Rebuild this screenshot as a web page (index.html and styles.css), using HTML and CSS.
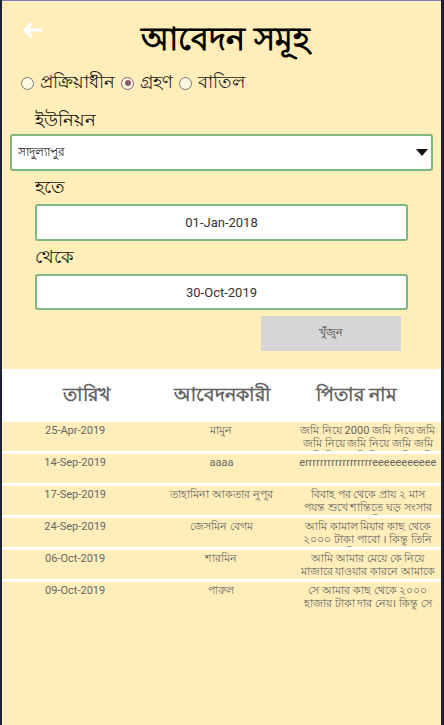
FILE: index.html
```html
<!DOCTYPE html>
<html lang="bn">
<head>
<meta charset="utf-8">
<title>আবেদন সমূহ</title>
<link rel="stylesheet" href="styles.css">
</head>
<body>
<div class="app">
  <header class="header">
    <span class="back">
      <svg width="20" height="16" viewBox="0 0 20 16"><path d="M18.5 8H3 M9 2 L3 8 L9 14" fill="none" stroke="#fff" stroke-width="3.2" stroke-linecap="round" stroke-linejoin="round"/></svg>
    </span>
    <h1 class="title">আবেদন সমূহ</h1>
  </header>

  <div class="radios">
    <label class="radio"><span class="dot"></span>প্রক্রিয়াধীন</label>
    <label class="radio checked"><span class="dot"></span>গ্রহণ</label>
    <label class="radio"><span class="dot"></span>বাতিল</label>
  </div>

  <div class="label">ইউনিয়ন</div>
  <div class="select">
    <span class="select-text">সাদুল্যাপুর</span>
    <svg class="caret" width="12" height="7" viewBox="0 0 12 7"><polygon points="0,0 12,0 6,7" fill="#111"/></svg>
  </div>

  <div class="label label-date">হতে</div>
  <div class="input">01-Jan-2018</div>

  <div class="label label-date">থেকে</div>
  <div class="input input2">30-Oct-2019</div>

  <div class="actions">
    <button class="btn">খুঁজুন</button>
  </div>

  <div class="table">
    <div class="thead">
      <div>তারিখ</div>
      <div>আবেদনকারী</div>
      <div>পিতার নাম</div>
    </div>
    <div class="row">
      <div class="c-date">25-Apr-2019</div>
      <div class="c-name">মামুন</div>
      <div class="c-desc">জমি নিয়ে 2000 জমি নিয়ে জমি জমি নিয়ে জমি নিয়ে জমি জমি জমি নিয়ে জমি নিয়ে জমি জমি</div>
    </div>
    <div class="row">
      <div class="c-date">14-Sep-2019</div>
      <div class="c-name">aaaa</div>
      <div class="c-desc">errrrrrrrrrrrrrrrrreeeeeeeeeee</div>
    </div>
    <div class="row">
      <div class="c-date">17-Sep-2019</div>
      <div class="c-name">তাহামিনা আকতার নুপুর</div>
      <div class="c-desc c-narrow">বিবাহ পর থেকে প্রায় ২ মাস পযন্ত শুখে শান্তিতে ঘড় সংসার করেছি</div>
    </div>
    <div class="row">
      <div class="c-date">24-Sep-2019</div>
      <div class="c-name">জেসমিন বেগম</div>
      <div class="c-desc">আমি কামাল মিয়ার কাছ থেকে ২০০০ টাকা পাবো । কিন্তু তিনি দিচ্ছেন না</div>
    </div>
    <div class="row">
      <div class="c-date">06-Oct-2019</div>
      <div class="c-name">শারমিন</div>
      <div class="c-desc">আমি আমার মেয়ে কে নিয়ে মাজারে যাওয়ার কারনে আমাকে মারধর করে</div>
    </div>
    <div class="row">
      <div class="c-date">09-Oct-2019</div>
      <div class="c-name">পারুল</div>
      <div class="c-desc">সে আমার কাছ থেকে ২০০০ হাজার টাকা দার নেয়। কিন্তু সে ফেরত দেয় না</div>
    </div>
  </div>
</div>
</body>
</html>
```

FILE: styles.css
```css
* { box-sizing: border-box; }

html, body {
  margin: 0;
  padding: 0;
  background: #1d2132;
}

body {
  font-family: "Noto Sans", Roboto, sans-serif;
  color: #1a1a1a;
}

.app {
  margin: 0 3px 0 2px;
  min-height: 725px;
  background: #ffeeba;
  border-top: 1px solid #7d80b4;
}

.header {
  height: 58px;
  display: flex;
  align-items: center;
  padding-left: 20px;
}

.back {
  display: flex;
  width: 20px;
  margin-top: 0;
}

.title {
  flex: 1;
  margin: 16px 0 0;
  padding-right: 32px;
  text-align: center;
  font-size: 32px;
  font-weight: 700;
  color: #000;
  line-height: 40px;
}

.radios {
  height: 48px;
  display: flex;
  align-items: center;
  padding-left: 19px;
  gap: 6px;
}

.radio {
  display: flex;
  align-items: center;
  gap: 6px;
  font-size: 18px;
  color: #1a1a1a;
}

.dot {
  width: 13px;
  height: 13px;
  border-radius: 50%;
  border: 1.5px solid #777;
  background: #fff8e0;
  display: flex;
  align-items: center;
  justify-content: center;
}

.checked .dot {
  border-color: #8a5c6d;
}

.checked .dot::after {
  content: "";
  width: 6px;
  height: 6px;
  border-radius: 50%;
  background: #8a5c6d;
}

.label {
  padding-left: 33px;
  font-size: 18px;
  height: 27px;
  line-height: 24px;
  color: #111;
}

.label-date {
  height: 33px;
  line-height: 30px;
}

.select {
  margin: 0 8px;
  height: 37px;
  background: #fff;
  border: 2px solid #7db67e;
  border-radius: 3px;
  display: flex;
  align-items: center;
  justify-content: space-between;
  padding: 0 3px 0 6px;
}

.select-text {
  font-size: 12px;
  color: #111;
}

.input {
  margin-left: 33px;
  width: 373px;
  height: 37px;
  background: #fff;
  border: 2px solid #7db67e;
  border-radius: 3px;
  display: flex;
  align-items: center;
  justify-content: center;
  font-family: Roboto, sans-serif;
  font-size: 13px;
  color: #333;
}

.input2 {
  height: 36px;
}

.actions {
  padding: 6px 0 0 259px;
}

.btn {
  width: 140px;
  height: 35px;
  border: none;
  background: #d6d6d6;
  font-family: "Noto Sans", Roboto, sans-serif;
  font-size: 11px;
  color: #444;
  padding: 0;
}

.table {
  margin-top: 18px;
  background: #fff;
}

.thead {
  height: 53px;
  display: grid;
  grid-template-columns: repeat(3, 1fr);
  align-items: center;
  padding: 0 17px;
  text-align: center;
  font-size: 19px;
  font-weight: 700;
  color: #666;
}

.row {
  height: 29px;
  margin-bottom: 3px;
  background: #ffeeba;
  display: grid;
  grid-template-columns: repeat(3, 1fr);
  overflow: hidden;
  font-family: Roboto, "Noto Sans", sans-serif;
  font-size: 11px;
  line-height: 13px;
  color: #666;
  text-align: center;
  padding-top: 2px;
}

.c-desc {
  padding: 0 4px;
  overflow-wrap: anywhere;
}

.c-narrow {
  padding: 0 6px;
}
```
